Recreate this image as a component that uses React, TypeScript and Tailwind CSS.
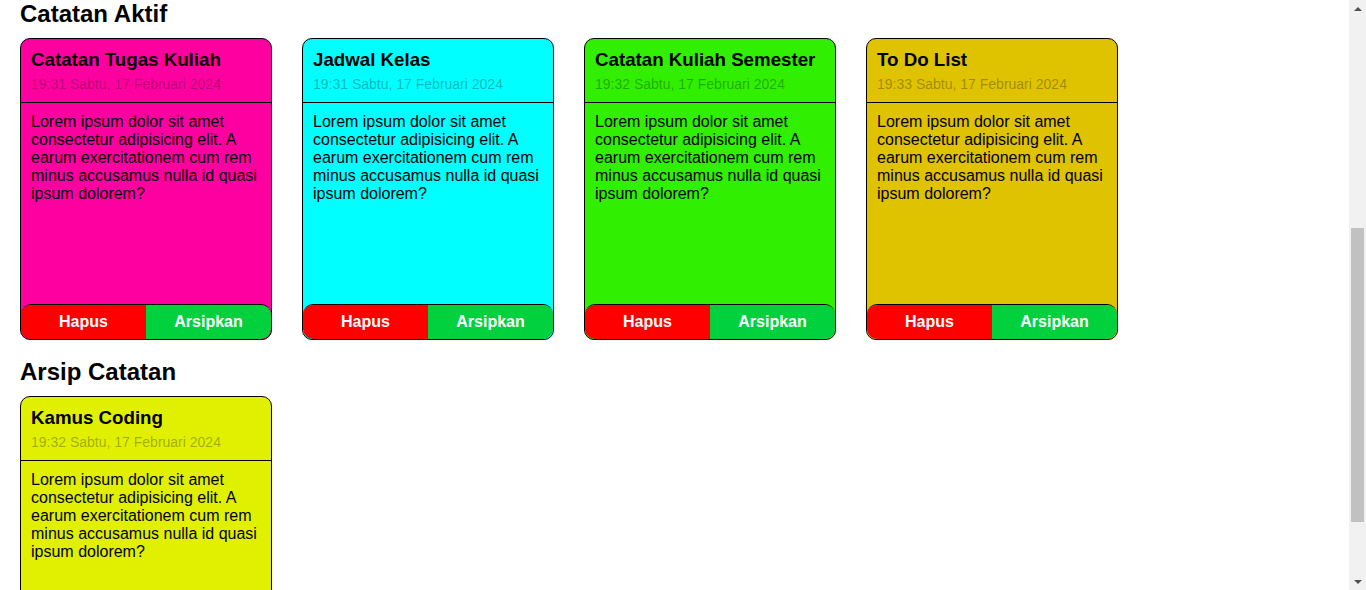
import React from 'react'

interface Note {
  id: number
  title: string
  date: string
  color: string
}

const BODY =
  'Lorem ipsum dolor sit amet consectetur adipisicing elit. A earum exercitationem cum rem minus accusamus nulla id quasi ipsum dolorem?'

const activeNotes: Note[] = [
  { id: 1, title: 'Catatan Tugas Kuliah', date: '19:31 Sabtu, 17 Februari 2024', color: 'bg-[#ff00a0]' },
  { id: 2, title: 'Jadwal Kelas', date: '19:31 Sabtu, 17 Februari 2024', color: 'bg-[#00ffff]' },
  { id: 3, title: 'Catatan Kuliah Semester', date: '19:32 Sabtu, 17 Februari 2024', color: 'bg-[#30ef00]' },
  { id: 4, title: 'To Do List', date: '19:33 Sabtu, 17 Februari 2024', color: 'bg-[#dfc200]' },
]

const archivedNotes: Note[] = [
  { id: 5, title: 'Kamus Coding', date: '19:32 Sabtu, 17 Februari 2024', color: 'bg-[#e0f000]' },
]

const NoteCard: React.FC<{ note: Note; archived?: boolean }> = ({ note, archived }) => {
  return (
    <div className={`flex h-[302px] w-[252px] flex-col overflow-hidden rounded-[10px] border border-black ${note.color}`}>
      <div className="border-b border-black px-[10px] pt-[10px] pb-[10px]">
        <h3 className="text-[18.72px] font-bold leading-[21.5px] text-black">{note.title}</h3>
        <p className="mt-[5px] text-[14px] leading-[16px] text-black/30">{note.date}</p>
      </div>
      <p className="flex-1 px-[10px] pt-[10px] text-[16px] leading-[18px] text-black">{BODY}</p>
      <div className="flex h-[35px] overflow-hidden rounded-[10px] border-t border-black">
        <button className="flex-1 bg-[#ff0000] text-[16px] font-bold text-white">Hapus</button>
        <button className="flex-1 bg-[#00d13d] text-[16px] font-bold text-white">
          {archived ? 'Pindahkan' : 'Arsipkan'}
        </button>
      </div>
    </div>
  )
}

// page scrollbar as it appears in the screenshot (scrolled down to the lists)
const Scrollbar: React.FC = () => (
  <div className="flex h-full w-[17px] shrink-0 flex-col bg-[#f1f1f1]">
    <div className="flex h-[17px] items-center justify-center">
      <div className="h-0 w-0 border-x-[4px] border-b-[4px] border-x-transparent border-b-[#505050]" />
    </div>
    <div className="mx-[2px] mt-[211px] h-[294px] bg-[#c1c1c1]" />
    <div className="mt-auto flex h-[17px] items-center justify-center">
      <div className="h-0 w-0 border-x-[4px] border-t-[4px] border-x-transparent border-t-[#505050]" />
    </div>
  </div>
)

export default function App() {
  return (
    <div
      className="flex h-screen overflow-hidden bg-white text-black"
      style={{ fontFamily: '"Liberation Sans", Arial, sans-serif' }}
    >
      <main className="flex-1 overflow-hidden px-5">
        <section>
          <h2 className="mb-[11px] text-[24px] font-bold leading-[27px]">Catatan Aktif</h2>
          <div className="flex flex-wrap gap-[30px]">
            {activeNotes.map((note) => (
              <NoteCard key={note.id} note={note} />
            ))}
          </div>
        </section>

        <section className="mt-[18px]">
          <h2 className="mb-[11px] text-[24px] font-bold leading-[27px]">Arsip Catatan</h2>
          <div className="flex flex-wrap gap-[30px]">
            {archivedNotes.map((note) => (
              <NoteCard key={note.id} note={note} archived />
            ))}
          </div>
        </section>
      </main>
      <Scrollbar />
    </div>
  )
}
